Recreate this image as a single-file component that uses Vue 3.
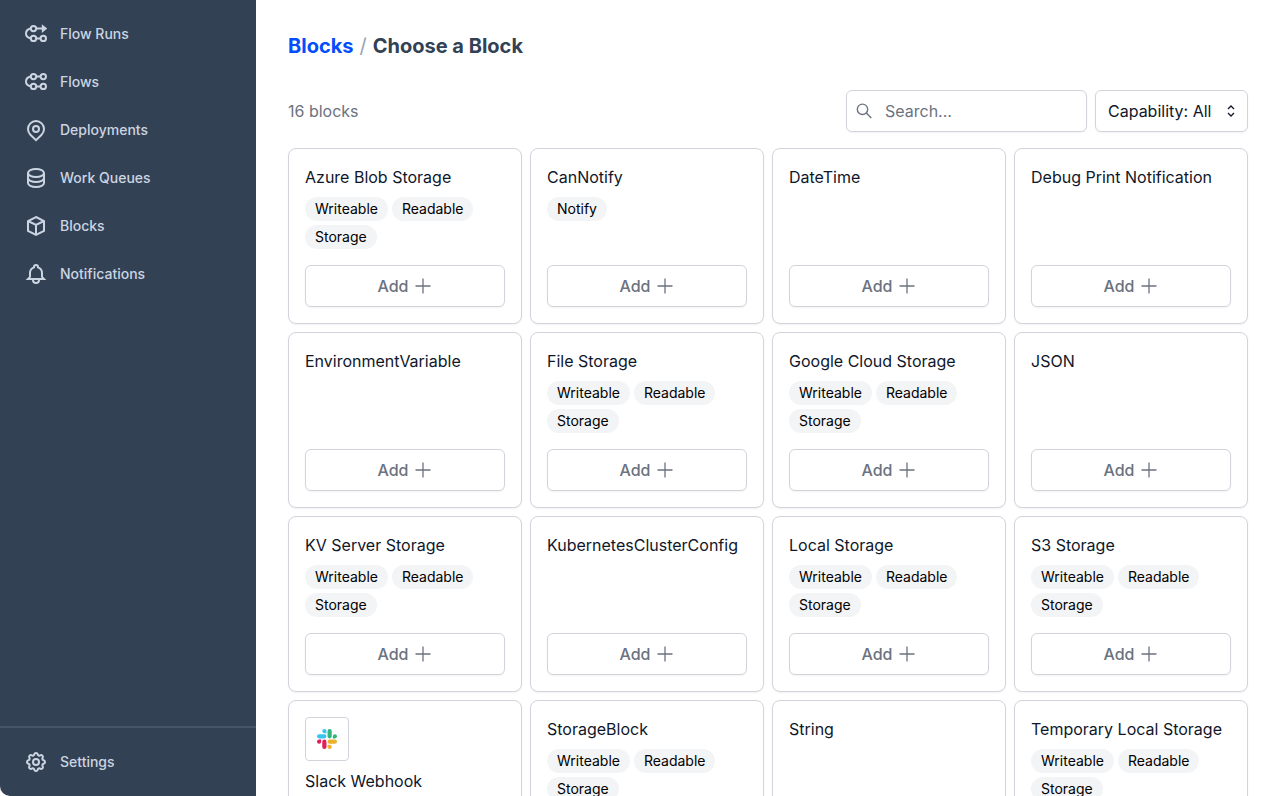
<script setup>
import { computed, ref } from 'vue'

const navItems = [
  { label: 'Flow Runs', icon: 'flow-runs' },
  { label: 'Flows', icon: 'flows' },
  { label: 'Deployments', icon: 'pin' },
  { label: 'Work Queues', icon: 'database' },
  { label: 'Blocks', icon: 'cube' },
  { label: 'Notifications', icon: 'bell' },
]

const storage = ['Writeable', 'Readable', 'Storage']

const blocks = [
  { name: 'Azure Blob Storage', tags: storage },
  { name: 'CanNotify', tags: ['Notify'] },
  { name: 'DateTime', tags: [] },
  { name: 'Debug Print Notification', tags: [] },
  { name: 'EnvironmentVariable', tags: [] },
  { name: 'File Storage', tags: storage },
  { name: 'Google Cloud Storage', tags: storage },
  { name: 'JSON', tags: [] },
  { name: 'KV Server Storage', tags: storage },
  { name: 'KubernetesClusterConfig', tags: [] },
  { name: 'Local Storage', tags: storage },
  { name: 'S3 Storage', tags: storage },
  { name: 'Slack Webhook', tags: ['Notify'], logo: 'slack' },
  { name: 'StorageBlock', tags: storage },
  { name: 'String', tags: [] },
  { name: 'Temporary Local Storage', tags: storage },
]

const search = ref('')
const capability = ref('All')
const capabilities = ['All', 'Notify', 'Readable', 'Storage', 'Writeable']

const visibleBlocks = computed(() =>
  blocks.filter(
    (block) =>
      block.name.toLowerCase().includes(search.value.toLowerCase()) &&
      (capability.value === 'All' || block.tags.includes(capability.value)),
  ),
)
</script>

<template>
  <div class="shell">
    <nav class="sidebar" aria-label="Main">
      <div class="nav-group">
        <a v-for="item in navItems" :key="item.label" href="#" class="nav-item">
          <svg class="nav-icon" viewBox="0 0 24 24" aria-hidden="true">
            <g v-if="item.icon === 'flow-runs'">
              <circle cx="9.5" cy="6.6" r="2.7" />
              <circle cx="9.5" cy="16.4" r="2.7" />
              <circle cx="19.3" cy="16.4" r="2.7" />
              <path d="M6.8 6.6C3.8 7.2 2 9.1 2 11.5s1.8 4.3 4.8 4.9M12.2 6.6H19M12.2 16.4h4.4" />
              <path class="solid" d="M17.8 2.2l5.4 4.4-5.4 4.4z" />
            </g>
            <g v-else-if="item.icon === 'flows'">
              <circle cx="9.5" cy="6.6" r="2.7" />
              <circle cx="19.3" cy="6.6" r="2.7" />
              <circle cx="9.5" cy="16.4" r="2.7" />
              <circle cx="19.3" cy="16.4" r="2.7" />
              <path d="M6.8 6.6C3.8 7.2 2 9.1 2 11.5s1.8 4.3 4.8 4.9M12.2 6.6h4.4M12.2 16.4h4.4" />
            </g>
            <g v-else-if="item.icon === 'pin'">
              <path d="M17.657 16.657L12 22.1l-5.657-5.443a8 8 0 1111.314 0z" />
              <circle cx="12" cy="11" r="3" />
            </g>
            <path
              v-else-if="item.icon === 'database'"
              d="M4 7v10c0 2.21 3.582 4 8 4s8-1.79 8-4V7M4 7c0 2.21 3.582 4 8 4s8-1.79 8-4M4 7c0-2.21 3.582-4 8-4s8 1.79 8 4m0 5c0 2.21-3.582 4-8 4s-8-1.79-8-4"
            />
            <path
              v-else-if="item.icon === 'cube'"
              d="M12 3l8 4v10l-8 4-8-4V7zM4 7l8 4 8-4M12 11v10"
            />
            <path
              v-else
              d="M15 17h5l-1.405-1.405A2.032 2.032 0 0118 14.158V11a6.002 6.002 0 00-4-5.659V5a2 2 0 10-4 0v.341C7.67 6.165 6 8.388 6 11v3.159c0 .538-.214 1.055-.595 1.436L4 17h5m6 0v1a3 3 0 11-6 0v-1m6 0H9"
            />
          </svg>
          <span>{{ item.label }}</span>
        </a>
      </div>
      <div class="nav-group nav-footer">
        <a href="#" class="nav-item">
          <svg class="nav-icon" viewBox="0 0 24 24" aria-hidden="true">
            <path
              d="M10.325 4.317c.426-1.756 2.924-1.756 3.35 0a1.724 1.724 0 002.573 1.066c1.543-.94 3.31.826 2.37 2.37a1.724 1.724 0 001.065 2.572c1.756.426 1.756 2.924 0 3.35a1.724 1.724 0 00-1.066 2.573c.94 1.543-.826 3.31-2.37 2.37a1.724 1.724 0 00-2.572 1.065c-.426 1.756-2.924 1.756-3.35 0a1.724 1.724 0 00-2.573-1.066c-1.543.94-3.31-.826-2.37-2.37a1.724 1.724 0 00-1.065-2.572c-1.756-.426-1.756-2.924 0-3.35a1.724 1.724 0 001.066-2.573c-.94-1.543.826-3.31 2.37-2.37.996.608 2.296.07 2.572-1.065z"
            />
            <circle cx="12" cy="12" r="3" />
          </svg>
          <span>Settings</span>
        </a>
      </div>
    </nav>

    <main class="content">
      <h1 class="heading">
        <a href="#" class="crumb">Blocks</a>
        <span class="slash">/</span>
        <span>Choose a Block</span>
      </h1>

      <div class="filters">
        <span class="count">{{ visibleBlocks.length }} blocks</span>
        <div class="search">
          <svg class="search-icon" viewBox="0 0 20 20" aria-hidden="true">
            <circle cx="8.5" cy="8.3" r="5.2" />
            <path d="M12.3 12.1l5 5" />
          </svg>
          <input v-model="search" class="search-input" type="text" placeholder="Search..." aria-label="Search blocks" />
        </div>
        <div class="picker">
          <select v-model="capability" class="picker-select" aria-label="Capability">
            <option v-for="name in capabilities" :key="name" :value="name">Capability: {{ name }}</option>
          </select>
          <svg class="picker-icon" viewBox="0 0 16 16" aria-hidden="true">
            <path d="M5 6l3-3 3 3M5 10l3 3 3-3" />
          </svg>
        </div>
      </div>

      <section class="grid" aria-label="Blocks">
        <article v-for="block in visibleBlocks" :key="block.name" class="card">
          <div v-if="block.logo" class="logo">
            <svg class="logo-mark" viewBox="0 0 24 24" role="img" aria-label="Slack">
              <path fill="#e01e5a" d="M5.042 15.165a2.528 2.528 0 0 1-2.52 2.523A2.528 2.528 0 0 1 0 15.165a2.527 2.527 0 0 1 2.522-2.52h2.52v2.52zM6.313 15.165a2.527 2.527 0 0 1 2.521-2.52 2.527 2.527 0 0 1 2.521 2.52v6.313A2.528 2.528 0 0 1 8.834 24a2.528 2.528 0 0 1-2.521-2.522v-6.313z" />
              <path fill="#36c5f0" d="M8.834 5.042a2.528 2.528 0 0 1-2.521-2.52A2.528 2.528 0 0 1 8.834 0a2.528 2.528 0 0 1 2.521 2.522v2.52H8.834zM8.834 6.313a2.528 2.528 0 0 1 2.521 2.521 2.528 2.528 0 0 1-2.521 2.521H2.522A2.528 2.528 0 0 1 0 8.834a2.528 2.528 0 0 1 2.522-2.521h6.312z" />
              <path fill="#2eb67d" d="M18.956 8.834a2.528 2.528 0 0 1 2.522-2.521A2.528 2.528 0 0 1 24 8.834a2.528 2.528 0 0 1-2.522 2.521h-2.522V8.834zM17.688 8.834a2.528 2.528 0 0 1-2.523 2.521 2.527 2.527 0 0 1-2.52-2.521V2.522A2.527 2.527 0 0 1 15.165 0a2.528 2.528 0 0 1 2.523 2.522v6.312z" />
              <path fill="#ecb22e" d="M15.165 18.956a2.528 2.528 0 0 1 2.523 2.522A2.528 2.528 0 0 1 15.165 24a2.527 2.527 0 0 1-2.52-2.522v-2.522h2.52zM15.165 17.688a2.527 2.527 0 0 1-2.52-2.523 2.526 2.526 0 0 1 2.52-2.52h6.313A2.527 2.527 0 0 1 24 15.165a2.528 2.528 0 0 1-2.522 2.523h-6.313z" />
            </svg>
          </div>
          <h2 class="name">{{ block.name }}</h2>
          <div class="tags">
            <span v-for="tag in block.tags" :key="tag" class="tag">{{ tag }}</span>
          </div>
          <button type="button" class="add">
            <span>Add</span>
            <svg class="add-icon" viewBox="0 0 20 20" aria-hidden="true">
              <path d="M10 2.5v15M2.5 10h15" />
            </svg>
          </button>
        </article>
      </section>
    </main>
  </div>
</template>

<style>
body {
  background: #fff;
}
</style>

<style scoped>
.shell {
  display: grid;
  grid-template-columns: 256px minmax(0, 1fr);
  height: 100vh;
  color: #0f172a;
  font-family: Inter, 'Liberation Sans', sans-serif;
  font-size: 16px;
  line-height: 24px;
}

.shell * {
  box-sizing: border-box;
}

.sidebar {
  display: flex;
  flex-direction: column;
  justify-content: space-between;
  background: #334155;
  border-bottom-left-radius: 10px;
}

.nav-group {
  padding: 10px 0;
}

.nav-footer {
  border-top: 2px solid #475569;
}

.nav-item {
  display: flex;
  align-items: center;
  gap: 12px;
  height: 48px;
  padding: 0 24px;
  color: #cbd5e1;
  font-size: 14px;
  font-weight: 500;
  line-height: 20px;
  text-decoration: none;
}

.nav-icon {
  width: 24px;
  height: 24px;
  fill: none;
  stroke: currentColor;
  stroke-width: 2;
}

.solid {
  fill: currentColor;
  stroke: none;
}

.content {
  padding: 32px;
  overflow-y: auto;
  scrollbar-width: none;
}

.heading {
  display: flex;
  gap: 6px;
  margin: 0 0 30px;
  color: #334155;
  font-size: 20px;
  font-weight: 700;
  line-height: 28px;
}

.crumb {
  color: #024dfd;
  text-decoration: none;
}

.slash {
  color: #94a3b8;
  font-weight: 400;
}

.filters {
  display: flex;
  align-items: center;
  gap: 8px;
  margin-bottom: 16px;
}

.count {
  margin-right: auto;
  color: #6b7280;
}

.search,
.picker {
  position: relative;
}

.search-input,
.picker-select {
  display: block;
  height: 42px;
  margin: 0;
  border: 1px solid #d1d5db;
  border-radius: 6px;
  background: #fff;
  color: #0f172a;
  font: inherit;
  box-shadow: 0 1px 2px rgba(0, 0, 0, 0.05);
}

.search-input {
  width: 241px;
  padding: 0 12px 0 38px;
}

.search-input::placeholder {
  color: #6b7280;
  opacity: 1;
}

.search-icon {
  position: absolute;
  top: 11px;
  left: 8px;
  width: 20px;
  height: 20px;
  fill: none;
  stroke: #6b7280;
  stroke-width: 1.4;
}

.picker-select {
  width: 153px;
  padding: 0 36px 0 12px;
  appearance: none;
}

.picker-icon {
  position: absolute;
  top: 13px;
  right: 9px;
  width: 16px;
  height: 16px;
  fill: none;
  stroke: #0f172a;
  stroke-width: 1.3;
  pointer-events: none;
}

.grid {
  display: grid;
  grid-template-columns: repeat(auto-fill, minmax(220px, 1fr));
  gap: 8px;
}

.card {
  display: flex;
  flex-direction: column;
  gap: 8px;
  min-height: 176px;
  padding: 16px;
  border: 1px solid #d1d5db;
  border-radius: 8px;
  background: #fff;
  box-shadow: 0 1px 2px rgba(0, 0, 0, 0.05);
}

.logo {
  display: grid;
  place-items: center;
  width: 44px;
  height: 44px;
  border: 1px solid #d1d5db;
  border-radius: 4px;
}

.logo-mark {
  width: 20px;
  height: 20px;
}

.name {
  margin: 0;
  font-size: 16px;
  font-weight: 400;
  line-height: 24px;
}

.tags {
  display: flex;
  flex-wrap: wrap;
  gap: 4px;
  margin-bottom: 8px;
}

.tag {
  padding: 2px 10px;
  border-radius: 12px;
  background: #f3f4f6;
  color: #000;
  font-size: 14px;
  line-height: 20px;
}

.add {
  display: flex;
  align-items: center;
  justify-content: center;
  gap: 4px;
  width: 100%;
  height: 42px;
  margin-top: auto;
  padding: 0;
  border: 1px solid #d1d5db;
  border-radius: 6px;
  background: #fff;
  color: #6b7280;
  font: inherit;
  font-weight: 500;
  box-shadow: 0 1px 2px rgba(0, 0, 0, 0.05);
}

.add-icon {
  width: 20px;
  height: 20px;
  fill: none;
  stroke: currentColor;
  stroke-width: 1.3;
}
</style>
